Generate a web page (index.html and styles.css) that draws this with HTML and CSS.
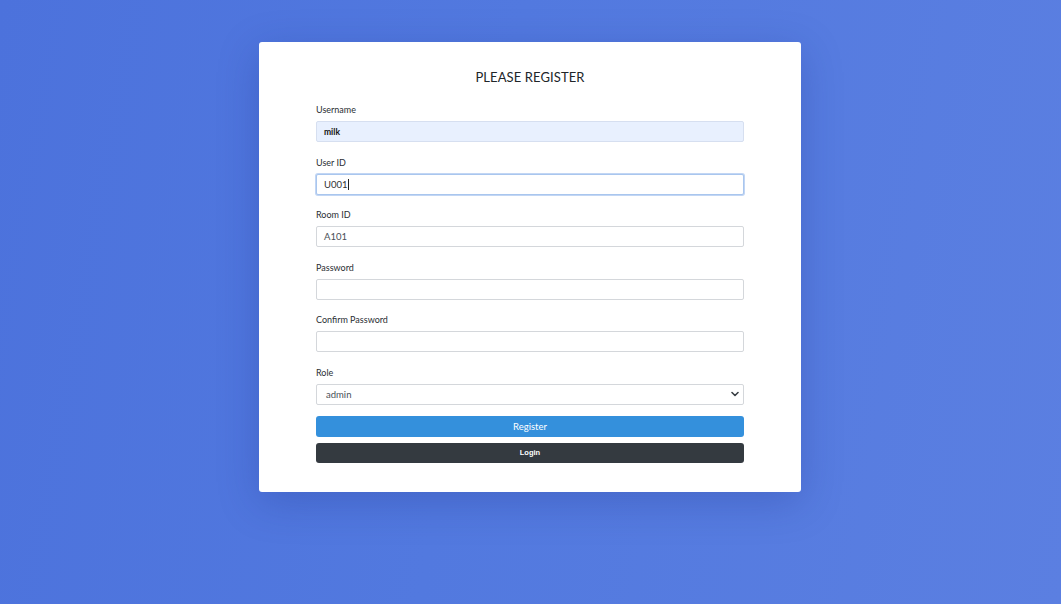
FILE: index.html
```html
<!DOCTYPE html>
<html lang="en">
<head>
<meta charset="utf-8">
<title>Register</title>
<link rel="stylesheet" href="styles.css">
</head>
<body>
<main class="page">
  <section class="card">
    <h1 class="title">PLEASE REGISTER</h1>
    <form class="form">
      <div class="group">
        <label class="label">Username</label>
        <div class="input autofill">milk</div>
      </div>
      <div class="group">
        <label class="label">User ID</label>
        <div class="input focus"><span>U001</span><span class="caret"></span></div>
      </div>
      <div class="group">
        <label class="label">Room ID</label>
        <div class="input">A101</div>
      </div>
      <div class="group">
        <label class="label">Password</label>
        <div class="input"></div>
      </div>
      <div class="group">
        <label class="label">Confirm Password</label>
        <div class="input"></div>
      </div>
      <div class="group last">
        <label class="label">Role</label>
        <div class="input select"><span>admin</span>
          <svg class="chev" width="8" height="6" viewBox="0 0 8 6"><path d="M1 1.5 L4 4.5 L7 1.5" fill="none" stroke="#3a3f45" stroke-width="1.6" stroke-linecap="round" stroke-linejoin="round"/></svg>
        </div>
      </div>
      <div class="btn primary">Register</div>
      <div class="btn dark">Login</div>
    </form>
  </section>
</main>
</body>
</html>
```

FILE: styles.css
```css
html, body {
  margin: 0;
  padding: 0;
  height: 100%;
}
body {
  background: linear-gradient(100deg, #4c72dc 0%, #5279df 45%, #5b7fe1 100%);
  font-family: Lato, "Noto Sans", sans-serif;
  color: #212529;
}
.page {
  height: 100%;
  display: flex;
  justify-content: center;
  align-items: flex-start;
  padding-top: 42px;
  box-sizing: border-box;
}
.card {
  width: 542px;
  margin-right: 1px;
  box-sizing: border-box;
  background: #fff;
  border-radius: 3px;
  padding: 25px 57px 29px;
  box-shadow: 0 10px 40px rgba(30, 50, 140, 0.28);
}
.title {
  margin: 0 0 17px;
  text-align: center;
  font-weight: 400;
  font-size: 13px;
  line-height: 20px;
  color: #212529;
  letter-spacing: 0.1px;
}
.form {
  display: flex;
  flex-direction: column;
}
.group {
  display: flex;
  flex-direction: column;
  margin-bottom: 14.6px;
}
.group.last {
  margin-bottom: 11px;
}
.label {
  font-size: 9px;
  line-height: 12px;
  margin-bottom: 5px;
  color: #2a2e33;
}
.input {
  height: 21px;
  box-sizing: border-box;
  border: 1px solid #d4d7db;
  border-radius: 2px;
  background: #fff;
  display: flex;
  align-items: center;
  padding: 0 7px;
  font-size: 9.5px;
  color: #495057;
}
.input.autofill {
  background: #e8f0fe;
  border-color: #d6dff0;
  color: #111;
  font-weight: 700;
  font-size: 8.5px;
}
.input.focus {
  border-color: #a9c6ee;
  box-shadow: 0 0 0 1px rgba(120, 165, 230, 0.45);
  color: #333;
}
.caret {
  display: inline-block;
  width: 1px;
  height: 11px;
  background: #222;
  margin-left: 0.5px;
}
.input.select {
  justify-content: space-between;
  padding: 0 4px 0 9px;
}
.chev {
  display: block;
}
.btn {
  height: 21px;
  border-radius: 3px;
  display: flex;
  align-items: center;
  justify-content: center;
  color: #fff;
  font-size: 9.5px;
}
.btn.primary {
  background: #3490dc;
}
.btn.dark {
  margin-top: 6px;
  height: 20px;
  background: #343a40;
  font-family: "Liberation Sans", Arial, sans-serif;
  font-weight: 700;
  font-size: 7.5px;
}
```
